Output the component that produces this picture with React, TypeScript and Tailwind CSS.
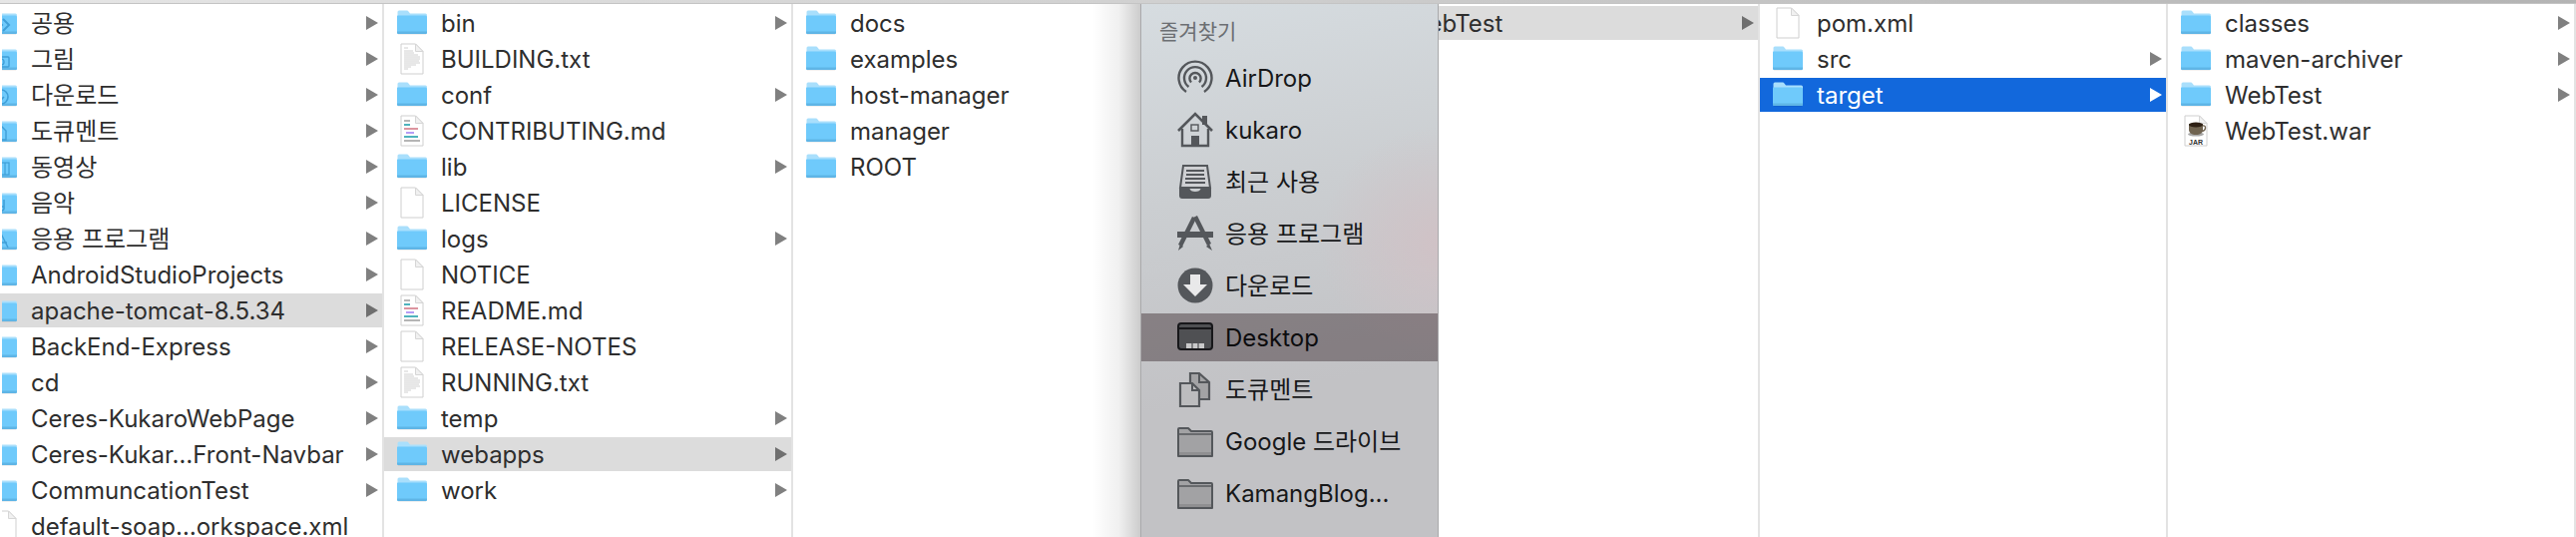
import type { ReactNode } from "react";

type Kind = "folder" | "text" | "md" | "blank" | "jar";
type Glyph = "share" | "camera" | "download" | "doc" | "film" | "music" | "apps";
type Item = { name: string; kind: Kind; arrow?: boolean; active?: "gray" | "blue"; glyph?: Glyph };

const folder = (name: string, active?: "gray" | "blue", glyph?: Glyph): Item => ({ name, kind: "folder", arrow: true, active, glyph });
const file = (name: string, kind: Kind): Item => ({ name, kind });

const col0: Item[] = [
  folder("공용", undefined, "share"),
  folder("그림", undefined, "camera"),
  folder("다운로드", undefined, "download"),
  folder("도큐멘트", undefined, "doc"),
  folder("동영상", undefined, "film"),
  folder("음악", undefined, "music"),
  folder("응용 프로그램", undefined, "apps"),
  folder("AndroidStudioProjects"),
  folder("apache-tomcat-8.5.34", "gray"),
  folder("BackEnd-Express"),
  folder("cd"),
  folder("Ceres-KukaroWebPage"),
  folder("Ceres-Kukar…Front-Navbar"),
  folder("CommuncationTest"),
  file("default-soap…orkspace.xml", "blank"),
];

const col1: Item[] = [
  folder("bin"),
  file("BUILDING.txt", "text"),
  folder("conf"),
  file("CONTRIBUTING.md", "md"),
  folder("lib"),
  file("LICENSE", "blank"),
  folder("logs"),
  file("NOTICE", "blank"),
  file("README.md", "md"),
  file("RELEASE-NOTES", "blank"),
  file("RUNNING.txt", "text"),
  folder("temp"),
  folder("webapps", "gray"),
  folder("work"),
];

const col2: Item[] = [folder("docs"), folder("examples"), folder("host-manager"), folder("manager"), folder("ROOT")].map((i) => ({ ...i, arrow: false }));
const col3: Item[] = [folder("WebTest", "gray")];
const col4: Item[] = [file("pom.xml", "blank"), folder("src"), folder("target", "blue")];
const col5: Item[] = [folder("classes"), folder("maven-archiver"), folder("WebTest"), file("WebTest.war", "jar")];

function GlyphMark({ glyph }: { glyph: Glyph }) {
  const c = "#3f9fd8";
  switch (glyph) {
    case "share":
      return <path d="M16 9l6 6-6 6M10 10l5 5-5 5" fill="none" stroke={c} strokeWidth="2" />;
    case "camera":
      return (
        <g fill="none" stroke={c} strokeWidth="1.4">
          <rect x="7" y="11" width="15" height="10" rx="1" />
          <circle cx="14" cy="16" r="3" />
        </g>
      );
    case "download":
      return (
        <g fill="none" stroke={c} strokeWidth="1.6">
          <circle cx="14" cy="15" r="7" />
          <path d="M14 11v7M11 15l3 3 3-3" />
        </g>
      );
    case "doc":
      return <path d="M8 9h7l4 4v9H8z" fill="none" stroke={c} strokeWidth="1.4" />;
    case "film":
      return (
        <g fill="none" stroke={c} strokeWidth="1.2">
          <rect x="7" y="9" width="15" height="12" />
          <path d="M11 9v12M18 9v12M7 13h4M7 17h4" />
        </g>
      );
    case "music":
      return <path d="M17 10v9a2.5 2 0 1 1-2-2h2" fill="none" stroke={c} strokeWidth="1.6" />;
    default:
      return <path d="M14 8l7 14M14 8l-7 14M8 17h12" fill="none" stroke={c} strokeWidth="1.4" />;
  }
}

function FolderIcon({ glyph }: { glyph?: Glyph }) {
  return (
    <svg width="30" height="26" viewBox="0 0 30 26" className="block shrink-0">
      <path d="M1 24.5h28V5H1z" fill="#000" opacity="0.12" />
      <path d="M0.5 2a1.5 1.5 0 0 1 1.5-1.5h7.5c1 0 1.5.4 2.2 1.3L13 3.5h15.5A1.5 1.5 0 0 1 30 5v3H0.5z" fill="#a9dffc" />
      <path d="M0.5 5.5h28A1.5 1.5 0 0 1 30 7v15.5a1.5 1.5 0 0 1-1.5 1.5h-27A1.5 1.5 0 0 1 0 22.5V6z" fill="#6fcafb" />
      <path d="M0 21.5h30v1a1.5 1.5 0 0 1-1.5 1.5h-27A1.5 1.5 0 0 1 0 22.5z" fill="#5fb5e6" />
      {glyph && <GlyphMark glyph={glyph} />}
    </svg>
  );
}

function FileIcon({ kind }: { kind: Kind }) {
  return (
    <svg width="24" height="32" viewBox="0 0 24 32" className="block shrink-0">
      <path d="M1 31V1h14.5L23 8.5V31z" fill="#fff" stroke="#cfcfcf" />
      <path d="M15.5 1v7.5H23z" fill="#f1f1f1" stroke="#d6d6d6" />
      {kind === "text" && (
        <g stroke="#c4c4c4" strokeWidth="0.8">
          <path d="M4 5h4M4 8h9M4 10h10M4 12h14M4 14h16M4 16h16M4 18h15M4 20h16M4 22h12M4 24h7M4 26h4" />
        </g>
      )}
      {kind === "md" && (
        <g strokeWidth="2">
          <path d="M4 6h6" stroke="#b5b5b5" />
          <path d="M4 10h6" stroke="#4fb3bd" />
          <path d="M4 14h14" stroke="#dc95a0" />
          <path d="M6 18h8" stroke="#b59cf5" />
          <path d="M4 22h14" stroke="#4fb3bd" />
          <path d="M4 26h16" stroke="#b5b5b5" />
        </g>
      )}
      {kind === "jar" && (
        <g>
          <ellipse cx="12" cy="19.5" rx="8" ry="2" fill="#a8a8a8" />
          <path d="M5 9h14v6c0 3-3 5-7 5s-7-2-7-5z" fill="#6f6350" />
          <ellipse cx="12" cy="10" rx="7" ry="2.6" fill="#2e2015" />
          <path d="M19 11c3.5-1 3.5 5 -1 5.5" fill="none" stroke="#6f6350" strokeWidth="1.4" />
          <rect x="6" y="23.5" width="12" height="6.5" fill="#fff" />
          <text x="12" y="29.5" textAnchor="middle" fontSize="7" fontWeight="700" fontFamily="Liberation Sans, sans-serif" fill="#333">JAR</text>
        </g>
      )}
    </svg>
  );
}

function Arrow({ active }: { active?: "gray" | "blue" }) {
  const fill = active === "blue" ? "#ffffff" : active === "gray" ? "#6f6f6f" : "#808080";
  return (
    <svg width="12" height="14" viewBox="0 0 12 14" className="ml-auto shrink-0">
      <polygon points="0,0 12,7 0,14" fill={fill} />
    </svg>
  );
}

function Row({ item, clipped }: { item: Item; clipped?: boolean }) {
  const bg = item.active === "gray" ? "bg-[#dcdcdc] text-[#2e2e2e]" : item.active === "blue" ? "bg-[#1268dc] text-white" : "text-[#2e2e2e]";
  const icon = item.kind === "folder" ? <FolderIcon glyph={item.glyph} /> : <FileIcon kind={item.kind} />;
  return (
    <div className={`flex h-[34px] items-center pr-[4px] ${clipped ? "pl-[2px]" : "pl-[13px]"} ${bg}`}>
      {clipped ? (
        <div className="flex h-[34px] w-[15px] shrink-0 items-center justify-end overflow-hidden">{icon}</div>
      ) : (
        <div className="flex h-[34px] w-[30px] shrink-0 items-center justify-center">{icon}</div>
      )}
      <span className="ml-[14px] whitespace-nowrap pt-[2px] text-[24px] leading-[34px]">{item.name}</span>
      {item.arrow && <Arrow active={item.active} />}
    </div>
  );
}

function Column({ items, width, clipped }: { items: Item[]; width: string; clipped?: boolean }) {
  return (
    <div className={`flex h-full shrink-0 flex-col gap-[2px] overflow-hidden border-r-2 border-[#e3e3e3] pt-[2px] ${width}`}>
      {items.map((item) => (
        <Row key={item.name} item={item} clipped={clipped} />
      ))}
    </div>
  );
}

function SideIcon({ children }: { children: ReactNode }) {
  return (
    <svg width="36" height="36" viewBox="0 0 36 36" className="shrink-0">
      {children}
    </svg>
  );
}

const ink = "#54575b";

const sideItems: { name: string; active?: boolean; icon: ReactNode }[] = [
  {
    name: "AirDrop",
    icon: (
      <SideIcon>
        <g fill="none" stroke={ink} strokeWidth="2.4">
          <path d="M9 32A16.5 16.5 0 1 1 27 32" />
          <path d="M11.5 27A11 11 0 1 1 24.5 27" />
          <path d="M14 22.5A5.6 5.6 0 1 1 22 22.5" />
        </g>
        <circle cx="18" cy="18" r="2" fill={ink} />
      </SideIcon>
    ),
  },
  {
    name: "kukaro",
    icon: (
      <SideIcon>
        <path d="M25 4h5v9h-5z" fill={ink} />
        <path d="M1 19L18 2l17 17" fill="none" stroke={ink} strokeWidth="2.6" />
        <path d="M5 17v17h26V17" fill="none" stroke={ink} strokeWidth="2.4" />
        <rect x="14" y="13" width="7" height="6" fill="none" stroke={ink} strokeWidth="1.4" />
        <rect x="14" y="24" width="8" height="10" fill={ink} />
      </SideIcon>
    ),
  },
  {
    name: "최근 사용",
    icon: (
      <SideIcon>
        <path d="M6 2h24l3 22H3z" fill="#cfd0d3" stroke={ink} strokeWidth="2" />
        <path d="M9 7h18M9 11h18M8 15h20M8 19h20" stroke={ink} strokeWidth="1.8" />
        <path d="M2 24h10c1 3 3 4 6 4s5-1 6-4h10v8a3 3 0 0 1-3 3H5a3 3 0 0 1-3-3z" fill={ink} />
      </SideIcon>
    ),
  },
  {
    name: "응용 프로그램",
    icon: (
      <SideIcon>
        <path d="M0 16h36v6H0z" fill={ink} />
        <path d="M17 2L3 30" stroke={ink} strokeWidth="4.5" />
        <path d="M18 1l14 28" stroke={ink} strokeWidth="4.5" />
        <path d="M3 28l-2 7 5-4zM32 28l3 7-6-4z" fill={ink} />
      </SideIcon>
    ),
  },
  {
    name: "다운로드",
    icon: (
      <SideIcon>
        <circle cx="18" cy="18" r="17.5" fill={ink} />
        <path d="M13 7h10v10h7L18 29 6 17h7z" fill="#e9e9ea" />
      </SideIcon>
    ),
  },
  {
    name: "Desktop",
    active: true,
    icon: (
      <SideIcon>
        <rect x="1" y="4" width="34" height="26" rx="3" fill="#4f5053" stroke="#17171a" strokeWidth="2" />
        <path d="M1 9h34" stroke="#17171a" strokeWidth="2" />
        <path d="M9 24h18v5H9z" fill="#c9c9ca" />
        <path d="M15 24v5M21 24v5" stroke="#4f5053" strokeWidth="1.2" />
      </SideIcon>
    ),
  },
  {
    name: "도큐멘트",
    icon: (
      <SideIcon>
        <path d="M13 2h9l10 9v17H13z" fill="#a3a3a5" stroke={ink} strokeWidth="2.2" />
        <path d="M22 2v9h10" fill="none" stroke={ink} strokeWidth="2" />
        <path d="M3 12h12l7 7v16H3z" fill="#bcbcbe" stroke={ink} strokeWidth="2.2" />
        <path d="M15 12v7h7" fill="none" stroke={ink} strokeWidth="2" />
      </SideIcon>
    ),
  },
  ...["Google 드라이브", "KamangBlog..."].map((name) => ({
    name,
    icon: (
      <SideIcon>
        <path d="M1 33V6a1 1 0 0 1 1-1h9l3 3h20a1 1 0 0 1 1 1v24z" fill="#a2a2a4" stroke={ink} strokeWidth="2" strokeLinejoin="round" />
        <path d="M1 11h34" stroke={ink} strokeWidth="1.6" />
        <path d="M2 29h32v3H2z" fill="#8f8f91" />
      </SideIcon>
    ),
  })),
];

function Sidebar() {
  return (
    <div className="absolute bottom-0 left-[1143px] top-[4px] w-[299px]">
      <div className="absolute bottom-0 left-[-48px] top-0 w-[48px] bg-[linear-gradient(to_right,rgba(0,0,0,0),rgba(0,0,0,0.06)_55%,rgba(0,0,0,0.2))]" />
      <div className="flex h-full flex-col border-x border-[#a9a9ab] bg-[radial-gradient(circle_at_100%_45%,#d0c2c6_0%,rgba(208,194,198,0)_28%),linear-gradient(170deg,#d6dce0_0%,#cbced1_35%,#c2c2c5_70%,#c2c2c5_100%)]">
        <div className="flex h-[50px] shrink-0 items-center pl-[18px] pt-[6px] text-[21px] text-[#6c6f73]">즐겨찾기</div>
        <div className="flex flex-col gap-[4px]">
          {sideItems.map((item) => (
            <div key={item.name} className={`flex h-[48px] items-center gap-[12px] pl-[36px] text-[24px] ${item.active ? "bg-[#3a2a2e]/45 text-[#0c0c0e]" : "text-[#17181a]"}`}>
              {item.icon}
              <span className="whitespace-nowrap pt-[2px]">{item.name}</span>
            </div>
          ))}
        </div>
      </div>
    </div>
  );
}

export default function App() {
  return (
    <div className="relative flex h-[538px] w-[2582px] flex-col overflow-hidden bg-white font-['Inter','Noto_Sans_CJK_KR',sans-serif]">
      <div className="h-[4px] shrink-0 border-b border-[#c4c4c4] bg-[linear-gradient(to_right,#e6e6e6,#d0d0d0_45%,#b4b4b4)]" />
      <div className="flex min-h-0 flex-1">
        <Column items={col0} width="w-[385px]" clipped />
        <Column items={col1} width="w-[410px]" />
        <Column items={col2} width="w-[557px]" />
        <Column items={col3} width="w-[412px]" />
        <Column items={col4} width="w-[409px]" />
        <Column items={col5} width="w-[409px]" />
      </div>
      <Sidebar />
    </div>
  );
}
